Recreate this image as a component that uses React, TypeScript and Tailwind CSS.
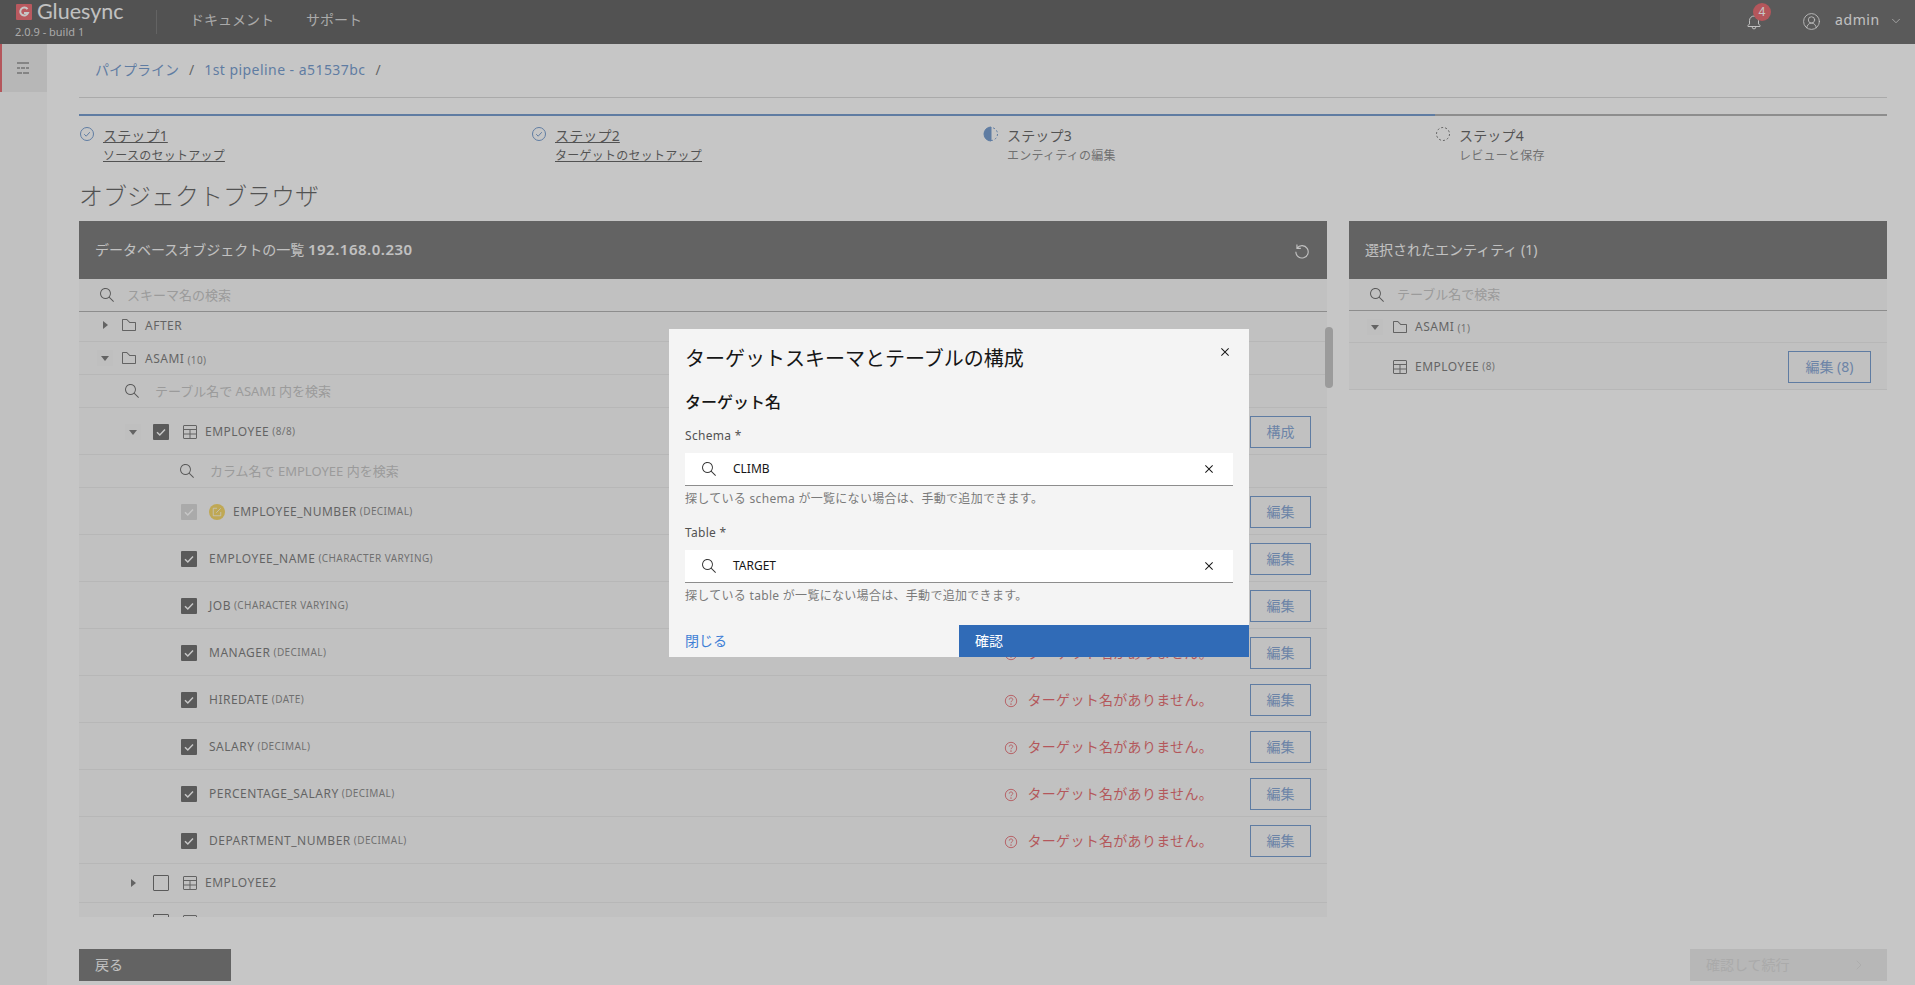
import React from "react";
import { ChevronDown, ChevronRight, CircleUserRound } from "lucide-react";

const BLUE = "#306bb7";

const Search = ({ className = "" }: { className?: string }) => (
  <svg viewBox="0 0 16 16" className={`h-4 w-4 shrink-0 fill-current ${className}`}>
    <path d="M15,14.3L10.7,10c1.9-2.3,1.6-5.8-0.7-7.7S4.2,0.7,2.3,3S0.7,8.8,3,10.7c2,1.7,5,1.7,7,0l4.3,4.3L15,14.3z M2,6.5C2,4,4,2,6.5,2S11,4,11,6.5S9,11,6.5,11S2,9,2,6.5z" />
  </svg>
);

const Close = () => (
  <svg viewBox="0 0 16 16" className="h-4 w-4 shrink-0 fill-current">
    <path d="M12 4.7L11.3 4 8 7.3 4.7 4 4 4.7 7.3 8 4 11.3 4.7 12 8 8.7 11.3 12 12 11.3 8.7 8z" />
  </svg>
);

const Folder = () => (
  <svg viewBox="0 0 16 16" className="h-4 w-4 shrink-0 fill-[#393939]">
    <path d="M5.6,3l2.5,2.5L8.4,6H9h5v7H2V3H5.6 M5.6,2H2C1.4,2,1,2.4,1,3v10c0,0.6,0.4,1,1,1h12c0.6,0,1-0.4,1-1V6c0-0.6-0.4-1-1-1H9L6.4,2.4C6.2,2.1,5.9,2,5.6,2z" />
  </svg>
);

const TableIcon = () => (
  <svg viewBox="0 0 16 16" className="h-4 w-4 shrink-0 fill-none stroke-[#393939]">
    <rect x="1.5" y="1.5" width="13" height="13" rx="0.5" />
    <path d="M1.5 5.5h13M1.5 10h13M8 5.5v9" />
  </svg>
);

const Caret = ({ open }: { open?: boolean }) => (
  <span className={`flex h-4 w-4 shrink-0 items-center justify-center ${open ? "bg-[#f0f0f0]" : ""}`}>
    <svg viewBox="0 0 16 16" className="h-4 w-4 fill-[#393939]">
      {open ? <path d="M4 6h8l-4 5z" /> : <path d="M6 4v8l5-4z" />}
    </svg>
  </span>
);

const Checkbox = ({ state }: { state: "on" | "off" | "disabled" }) => {
  if (state === "off") {
    return <span className="block h-4 w-4 shrink-0 rounded-[1px] border border-[#262626]" />;
  }
  return (
    <span className={`flex h-4 w-4 shrink-0 items-center justify-center rounded-[1px] ${state === "on" ? "bg-[#262626]" : "bg-[#c6c6c6]"}`}>
      <svg viewBox="0 0 16 16" className="h-4 w-4 fill-none stroke-white stroke-[1.5]">
        <path d="M4 8.2l2.8 2.8L12 5.5" />
      </svg>
    </span>
  );
};

const Help = () => (
  <svg viewBox="0 0 16 16" className="mt-[3px] h-[14px] w-[14px] shrink-0 fill-none stroke-[#da1e28]">
    <circle cx="8" cy="8" r="6.5" />
    <path d="M6 6.4c0-1.2.9-1.9 2-1.9s2 .7 2 1.8c0 1.5-2 1.5-2 3.1" />
    <circle cx="8" cy="11.5" r="0.4" />
  </svg>
);

const CheckStep = () => (
  <svg viewBox="0 0 16 16" className="h-4 w-4 shrink-0 fill-none" stroke={BLUE}>
    <circle cx="8" cy="8" r="6.5" />
    <path d="M5.2 8.2l2 2 3.6-4" />
  </svg>
);

const HalfStep = () => (
  <svg viewBox="0 0 16 16" className="h-4 w-4 shrink-0 fill-none" stroke={BLUE}>
    <path d="M8 1a7 7 0 0 0 0 14z" fill={BLUE} />
    <circle cx="8" cy="8" r="6.5" strokeDasharray="2 2" />
  </svg>
);

const EmptyStep = () => (
  <svg viewBox="0 0 16 16" className="h-4 w-4 shrink-0 fill-none stroke-[#393939]">
    <circle cx="8" cy="8" r="6.5" strokeDasharray="2 2" />
  </svg>
);

const OutlineButton = ({ children, wide }: { children: React.ReactNode; wide?: boolean }) => (
  <button className={`h-8 shrink-0 border border-[#306bb7] bg-transparent text-sm text-[#4a7ac0] ${wide ? "w-[83px]" : "w-[61px]"}`}>
    {children}
  </button>
);

const Tag = ({ children }: { children: React.ReactNode }) => (
  <span className="ml-[3px] text-[10px] tracking-[0.4px] text-[#525252]">{children}</span>
);

const columns = [
  { name: "EMPLOYEE_NUMBER", type: "DECIMAL", key: true },
  { name: "EMPLOYEE_NAME", type: "CHARACTER VARYING" },
  { name: "JOB", type: "CHARACTER VARYING" },
  { name: "MANAGER", type: "DECIMAL", missing: true },
  { name: "HIREDATE", type: "DATE", missing: true },
  { name: "SALARY", type: "DECIMAL", missing: true },
  { name: "PERCENTAGE_SALARY", type: "DECIMAL", missing: true },
  { name: "DEPARTMENT_NUMBER", type: "DECIMAL", missing: true },
];

const steps = [
  { title: "ステップ1", sub: "ソースのセットアップ", icon: <CheckStep />, done: true },
  { title: "ステップ2", sub: "ターゲットのセットアップ", icon: <CheckStep />, done: true },
  { title: "ステップ3", sub: "エンティティの編集", icon: <HalfStep />, active: true },
  { title: "ステップ4", sub: "レビューと保存", icon: <EmptyStep /> },
];

const SearchRow = ({ text, className }: { text: string; className: string }) => (
  <div className={`flex items-center border-b border-[#e0e0e0] text-[13px] text-[#a8a8a8] ${className}`}>
    <Search className="text-[#262626]" />
    <span>{text}</span>
  </div>
);

const Field = ({ label, value, help }: { label: string; value: string; help: string }) => (
  <div>
    <div className="mb-[9px] text-xs leading-4 tracking-[0.3px] text-[#525252]">{label}</div>
    <div className="flex h-[33px] items-center border-b border-[#8d8d8d] bg-white pl-4 pr-4 text-[#161616]">
      <Search className="mr-4 text-[#393939]" />
      <span className="flex-1 text-xs">{value}</span>
      <Close />
    </div>
    <div className="mt-[5px] text-xs leading-4 tracking-[0.3px] text-[#7a7a7a]">{help}</div>
  </div>
);

export default function App() {
  return (
    <div className="relative flex h-[985px] w-[1915px] flex-col overflow-hidden bg-white font-['Noto_Sans','Noto_Sans_CJK_JP',sans-serif] text-sm text-[#393939]">
      <header className="flex h-11 shrink-0 items-center bg-[#161616]">
        <div className="-mt-[3px] w-[156px] pl-[15px]">
          <div className="-mt-[1px] flex h-[22px] items-center">
            <svg viewBox="0 0 16 16" className="ml-[1px] h-4 w-4 shrink-0">
              <rect width="16" height="16" rx="1" fill="#e52531" />
              <path d="M11.5 5.2A4 4 0 1 0 12 9H8" fill="none" stroke="#fff" strokeWidth="2" />
            </svg>
            <span className="ml-[5px] font-['Lato',sans-serif] text-[21.5px] leading-none text-[#f4f4f4]">Gluesync</span>
          </div>
          <div className="mt-[2px] text-[11px] leading-[14px] text-[#c6c6c6]">2.0.9 - build 1</div>
        </div>
        <div className="h-6 w-px bg-[#393939]" />
        <nav className="-mt-[4px] ml-[33px] flex gap-[32px] text-sm text-[#c6c6c6]">
          <span>ドキュメント</span>
          <span>サポート</span>
        </nav>
        <div className="ml-auto flex h-full w-[195px] items-center bg-[#262626] text-[#f4f4f4]">
          <div className="relative ml-[26px] h-4 w-4">
            <svg viewBox="0 0 16 16" className="h-4 w-4 fill-none stroke-[#f4f4f4]">
              <path d="M2 11.5l1.5-1.6V6.5a4.5 4.5 0 0 1 9 0v3.4l1.5 1.6v1H2zM6.2 12.5v.6a1.8 1.8 0 0 0 3.6 0v-.6" />
            </svg>
            <span className="absolute -top-[11px] left-[7px] flex h-[18px] w-[18px] items-center justify-center rounded-full bg-[#da1e28] text-xs text-white">4</span>
          </div>
          <CircleUserRound className="-mt-[2px] ml-[40px] h-[19px] w-[19px]" strokeWidth={1.1} />
          <span className="-mt-[4px] ml-[14px] text-sm tracking-[0.6px]">admin</span>
          <ChevronDown className="-mt-[2px] ml-[9px] h-3.5 w-3.5" strokeWidth={1.2} />
        </div>
      </header>

      <div className="flex min-h-0 flex-1">
        <aside className="w-[47px] shrink-0 bg-[#f4f4f4]">
          <div className="flex h-12 items-center justify-center border-l-2 border-[#da1e28] bg-[#e0e0e0] pr-[3px]">
            <svg viewBox="0 0 16 16" className="h-4 w-4 fill-none stroke-[#161616]">
              <path d="M2 3h12M2 8h3M6 8h4M11 8h3M2 13h5M8 13h6" />
            </svg>
          </div>
        </aside>

        <main className="flex min-w-0 flex-1 flex-col pl-8 pr-7">
          <div className="flex h-[54px] shrink-0 items-center gap-[10px] border-b border-[#c6c6c6] pb-[1px] pl-4">
            <span className="text-[#306bb7]">パイプライン</span>
            <span>/</span>
            <span className="tracking-[0.45px] text-[#306bb7]">1st pipeline - a51537bc</span>
            <span>/</span>
          </div>

          <div className="mt-4 grid h-[63px] shrink-0 grid-cols-4">
            {steps.map((s, i) => (
              <div
                key={s.title}
                className={`flex gap-2 border-t-2 pt-[10px] ${i < 3 ? "border-[#306bb7]" : "border-[#8d8d8d]"}`}
              >
                {s.icon}
                <div className={`text-[#161616] ${s.done ? "underline" : ""}`}>
                  <div className="text-sm leading-5 tracking-[0.16px]">{s.title}</div>
                  <div className={`text-xs leading-5 tracking-[0.25px] ${s.done ? "" : "text-[#525252]"}`}>{s.sub}</div>
                </div>
              </div>
            ))}
          </div>

          <h1 className="mt-[3px] h-[41px] shrink-0 text-2xl font-light leading-8 text-[#161616]">オブジェクトブラウザ</h1>

          <div className="flex h-[696px] shrink-0 items-start gap-[22px]">
            <section className="relative flex h-full w-[1248px] shrink-0 flex-col">
              <div className="flex h-[58px] shrink-0 items-center justify-between bg-[#393939] pl-4 pr-4 text-[#f4f4f4]">
                <span>
                  データベースオブジェクトの一覧 <b className="text-[15px] font-semibold tracking-[0.5px]">192.168.0.230</b>
                </span>
                <svg viewBox="0 0 16 16" className="h-[18px] w-[18px] fill-none stroke-[#f4f4f4]">
                  <path d="M3.5 3v3.5H7M3.7 6.2A5.5 5.5 0 1 1 2.5 9.5" />
                </svg>
              </div>

              <div className="flex h-[33px] shrink-0 items-center gap-3 border-b border-[#8d8d8d] bg-[#f4f4f4] pl-5 text-[13px] text-[#a8a8a8]">
                <Search className="text-[#262626]" />
                <span>スキーマ名の検索</span>
              </div>

              <div className="min-h-0 flex-1 overflow-hidden bg-[#f4f4f4]">
                <div className="-mt-[3px]">
                  <div className="flex h-[33px] items-center border-b border-[#e0e0e0] pl-[18px]">
                    <Caret />
                    <span className="ml-2"><Folder /></span>
                    <span className="ml-2 pt-[2px] text-xs tracking-[0.5px]">AFTER</span>
                  </div>
                  <div className="flex h-[33px] items-center border-b border-[#e0e0e0] pl-[18px]">
                    <Caret open />
                    <span className="ml-2"><Folder /></span>
                    <span className="ml-2 pt-[2px] text-xs tracking-[0.5px]">ASAMI</span>
                    <span className="pt-[2px]"><Tag>(10)</Tag></span>
                  </div>
                  <SearchRow text="テーブル名で ASAMI 内を検索" className="h-[33px] gap-[15px] pl-[45px]" />
                  <div className="flex h-[47px] items-center border-b border-[#e0e0e0] pl-[46px] pt-[1px]">
                    <Caret open />
                    <span className="ml-[12px]"><Checkbox state="on" /></span>
                    <span className="ml-[13px]"><TableIcon /></span>
                    <span className="ml-[7px] text-xs tracking-[0.5px]">EMPLOYEE</span>
                    <Tag>(8/8)</Tag>
                    <span className="ml-auto mr-4"><OutlineButton>構成</OutlineButton></span>
                  </div>
                  <SearchRow text="カラム名で EMPLOYEE 内を検索" className="h-[33px] gap-[15px] pl-[100px]" />
                  {columns.map((c) => (
                    <div key={c.name} className="flex h-[47px] items-center border-b border-[#e0e0e0] pl-[102px] pt-[1px]">
                      <Checkbox state={c.key ? "disabled" : "on"} />
                      {c.key && (
                        <span className="ml-3 flex h-4 w-4 items-center justify-center rounded-full bg-[#f1c21b]">
                          <svg viewBox="0 0 16 16" className="h-3 w-3 fill-none stroke-white">
                            <path d="M8 3H3v10h10V8M7 9l6-6" />
                          </svg>
                        </span>
                      )}
                      <span className={`${c.key ? "ml-2" : "ml-3"} text-xs tracking-[0.5px]`}>{c.name}</span>
                      <Tag>({c.type})</Tag>
                      <span className="ml-auto mr-4 flex items-center">
                        {c.missing && (
                          <span className="mr-[37px] flex items-center gap-[10px] text-sm tracking-[0.3px] text-[#da1e28]">
                            <Help />
                            ターゲット名がありません。
                          </span>
                        )}
                        <OutlineButton>編集</OutlineButton>
                      </span>
                    </div>
                  ))}
                  {["EMPLOYEE2", ""].map((t, i) => (
                    <div key={i} className="flex h-[39px] items-center border-b border-[#e0e0e0] pl-[46px]">
                      <Caret />
                      <span className="ml-[12px]"><Checkbox state="off" /></span>
                      <span className="ml-[13px]"><TableIcon /></span>
                      <span className="ml-[7px] text-xs tracking-[0.5px]">{t}</span>
                    </div>
                  ))}
                </div>
              </div>
              <div className="absolute right-[-6px] top-[106px] h-[61px] w-2 rounded bg-[#a8a8a8]" />
            </section>

            <section className="flex w-[538px] shrink-0 flex-col">
              <div className="flex h-[58px] items-center bg-[#393939] pl-4 text-[#f4f4f4]">選択されたエンティティ (1)</div>
              <div className="flex h-[32px] items-center gap-3 border-b border-[#8d8d8d] bg-[#f4f4f4] pl-5 text-[13px] text-[#a8a8a8]">
                <Search className="text-[#262626]" />
                <span>テーブル名で検索</span>
              </div>
              <div className="flex h-[32px] items-center border-b border-[#e0e0e0] bg-[#f4f4f4] pl-[18px]">
                <Caret open />
                <span className="ml-[9px]"><Folder /></span>
                <span className="ml-[7px] pt-[1px] text-xs tracking-[0.5px]">ASAMI</span>
                <span className="pt-[1px]"><Tag>(1)</Tag></span>
              </div>
              <div className="flex h-[47px] items-center border-b border-[#e0e0e0] bg-[#f4f4f4] pl-[43px] pr-4 pt-[1px]">
                <TableIcon />
                <span className="ml-[7px] text-xs tracking-[0.5px]">EMPLOYEE</span>
                <Tag>(8)</Tag>
                <span className="ml-auto"><OutlineButton wide>編集 (8)</OutlineButton></span>
              </div>
            </section>
          </div>

          <div className="mt-8 flex justify-between">
            <button className="h-8 w-[152px] bg-[#393939] pl-4 text-left text-sm text-[#f4f4f4]">戻る</button>
            <button className="flex h-8 w-[197px] items-center justify-between bg-[#e0e0e0] pl-4 pr-5 text-sm text-[#c6c6c6]">
              確認して続行
              <ChevronRight className="h-4 w-4" strokeWidth={1.2} />
            </button>
          </div>
        </main>
      </div>

      <div className="absolute inset-0 flex items-center justify-center bg-[rgba(141,141,141,0.5)]">
        <div className="ml-[3px] flex h-[328px] w-[580px] flex-col bg-[#f4f4f4] text-[#161616]">
          <div className="flex items-start justify-between pl-4 pr-4 pt-4">
            <h2 className="text-xl leading-7">ターゲットスキーマとテーブルの構成</h2>
            <span className="mt-[-1px]"><Close /></span>
          </div>
          <div className="flex flex-1 flex-col px-4">
            <div className="mt-[17px] text-base font-medium leading-6">ターゲット名</div>
            <div className="mt-[14px]"><Field label="Schema *" value="CLIMB" help="探している schema が一覧にない場合は、手動で追加できます。" /></div>
            <div className="mt-[18px]"><Field label="Table *" value="TARGET" help="探している table が一覧にない場合は、手動で追加できます。" /></div>
          </div>
          <div className="flex h-8 shrink-0">
            <button className="flex-1 pl-4 text-left text-sm text-[#3f7fd6]">閉じる</button>
            <button className="w-[290px] bg-[#306bb7] pl-4 text-left text-sm text-white">確認</button>
          </div>
        </div>
      </div>
    </div>
  );
}
